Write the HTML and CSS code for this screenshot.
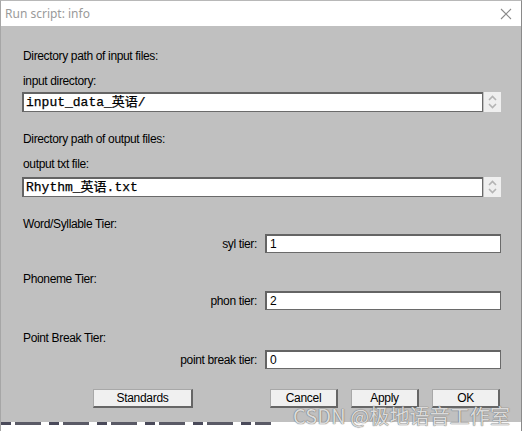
FILE: index.html
```html
<!DOCTYPE html>
<html>
<head>
<meta charset="utf-8">
<link rel="stylesheet" href="styles.css">
</head>
<body>
<div class="window">
  <div class="titlebar">
    <span class="title">Run script: info</span>
    <svg class="close" width="12" height="12" viewBox="0 0 12 12"><path d="M1 1 L11 11 M11 1 L1 11" stroke="#8a8a8a" stroke-width="1.1" fill="none"/></svg>
  </div>
  <div class="content">
    <div class="label l1">Directory path of input files:</div>
    <div class="label l2">input directory:</div>
    <div class="textrow r1">
      <div class="field mono">input_data_英语/</div>
      <div class="spin"><svg width="17" height="20" viewBox="0 0 17 20"><path d="M5 8 L8.5 4.5 L12 8" stroke="#b4b4b4" stroke-width="1.6" fill="none"/><path d="M5 12 L8.5 15.5 L12 12" stroke="#b4b4b4" stroke-width="1.6" fill="none"/></svg></div>
    </div>
    <div class="label l3">Directory path of output files:</div>
    <div class="label l4">output txt file:</div>
    <div class="textrow r2">
      <div class="field mono">Rhythm_英语.txt</div>
      <div class="spin"><svg width="17" height="20" viewBox="0 0 17 20"><path d="M5 8 L8.5 4.5 L12 8" stroke="#b4b4b4" stroke-width="1.6" fill="none"/><path d="M5 12 L8.5 15.5 L12 12" stroke="#b4b4b4" stroke-width="1.6" fill="none"/></svg></div>
    </div>
    <div class="label l5">Word/Syllable Tier:</div>
    <div class="fieldrow f1">
      <span class="flabel">syl tier:</span>
      <div class="field small">1</div>
    </div>
    <div class="label l6">Phoneme Tier:</div>
    <div class="fieldrow f2">
      <span class="flabel">phon tier:</span>
      <div class="field small">2</div>
    </div>
    <div class="label l7">Point Break Tier:</div>
    <div class="fieldrow f3">
      <span class="flabel">point break tier:</span>
      <div class="field small">0</div>
    </div>
    <div class="buttons">
      <div class="btn std">Standards</div>
      <div class="btn">Cancel</div>
      <div class="btn">Apply</div>
      <div class="btn">OK</div>
    </div>
    <div class="watermark">CSDN @极地语音工作室</div>
  </div>
  <div class="bottomstrip"></div>
</div>
</body>
</html>
```
FILE: styles.css
```css
html, body {
  margin: 0;
  padding: 0;
  background: #ffffff;
}
.window {
  width: 522px;
  height: 431px;
  box-sizing: border-box;
  border-left: 1px solid #a6a6a6;
  border-right: 1px solid #8a8a8a;
  border-top: 1px solid #b8b8b8;
  display: flex;
  flex-direction: column;
  font-family: "Liberation Sans", Arial, sans-serif;
}
.titlebar {
  height: 25px;
  background: #ffffff;
  display: flex;
  align-items: center;
  padding-left: 4px;
  padding-right: 9px;
}
.title {
  font-family: "Noto Sans", "Open Sans", sans-serif;
  font-size: 12px;
  color: #9a9a9a;
  flex: 1;
}
.content {
  position: relative;
  background: #c0c0c0;
  height: 396px;
  padding-left: 21px;
  padding-right: 20px;
  padding-top: 23px;
  box-sizing: border-box;
  display: flex;
  flex-direction: column;
}
.label {
  font-size: 12px;
  letter-spacing: -0.35px;
  line-height: 14px;
  height: 14px;
  color: #000;
  padding-left: 1px;
}
.l2, .l4 { margin-top: 11px; }
.l3, .l5 { margin-top: 20px; }
.l6 { margin-top: 19px; }
.l7 { margin-top: 21px; }
.textrow {
  display: flex;
  height: 20px;
}
.r1 { margin-top: 4px; }
.r2 { margin-top: 6px; }
.field {
  background: #ffffff;
  border: 1px solid #6a6a6a;
  border-top: 2px solid #646464;
  border-left: 2px solid #646464;
  box-sizing: border-box;
  height: 20px;
}
.mono {
  width: 463px;
  font-family: "Liberation Mono", "Courier New", "Noto Sans CJK SC", monospace;
  font-size: 13px;
  line-height: 17px;
  padding-left: 2px;
  color: #000;
  -webkit-text-stroke: 0.25px #000;
}
.spin {
  width: 17px;
  height: 20px;
  margin-left: 1px;
  background: #efefef;
}
.spin svg { display: block; }
.fieldrow {
  display: flex;
  align-items: center;
  justify-content: flex-end;
  height: 19px;
}
.f1 { margin-top: 3px; }
.f2 { margin-top: 5px; }
.f3 { margin-top: 5px; }
.flabel {
  font-size: 12px;
  letter-spacing: -0.35px;
  margin-right: 8px;
}
.small {
  width: 236px;
  height: 19px;
  font-size: 12px;
  line-height: 16px;
  padding-left: 3px;
}
.buttons {
  display: flex;
  margin-top: 20px;
  height: 19px;
  padding-left: 71px;
  gap: 13px;
}
.btn {
  flex: none;
  width: 68px;
  height: 19px;
  box-sizing: border-box;
  background: #f0f0f0;
  border: 1px solid #a8a8a8;
  border-right: 2px solid #666666;
  border-bottom: 2px solid #666666;
  font-size: 12px;
  letter-spacing: -0.3px;
  line-height: 16px;
  text-align: center;
}
.std {
  width: 100px;
  margin-right: 64px;
}
.watermark {
  position: absolute;
  left: 292px;
  top: 375px;
  font-family: "Noto Sans CJK SC", sans-serif;
  font-size: 20px;
  color: rgba(240, 240, 240, 0.85);
  text-shadow: 0 0 1px #6a6a6a, 0 0 1px #6a6a6a;
  white-space: nowrap;
  letter-spacing: 0.1px;
}
.bottomstrip {
  flex: 1;
  background-image: repeating-linear-gradient(90deg, #4a4a5a 0 10px, #ffffff 10px 14px, #5a5a66 14px 40px, #ffffff 40px 48px);
  background-size: 270px 3px;
  background-repeat: no-repeat;
  background-color: #ffffff;
}
```
